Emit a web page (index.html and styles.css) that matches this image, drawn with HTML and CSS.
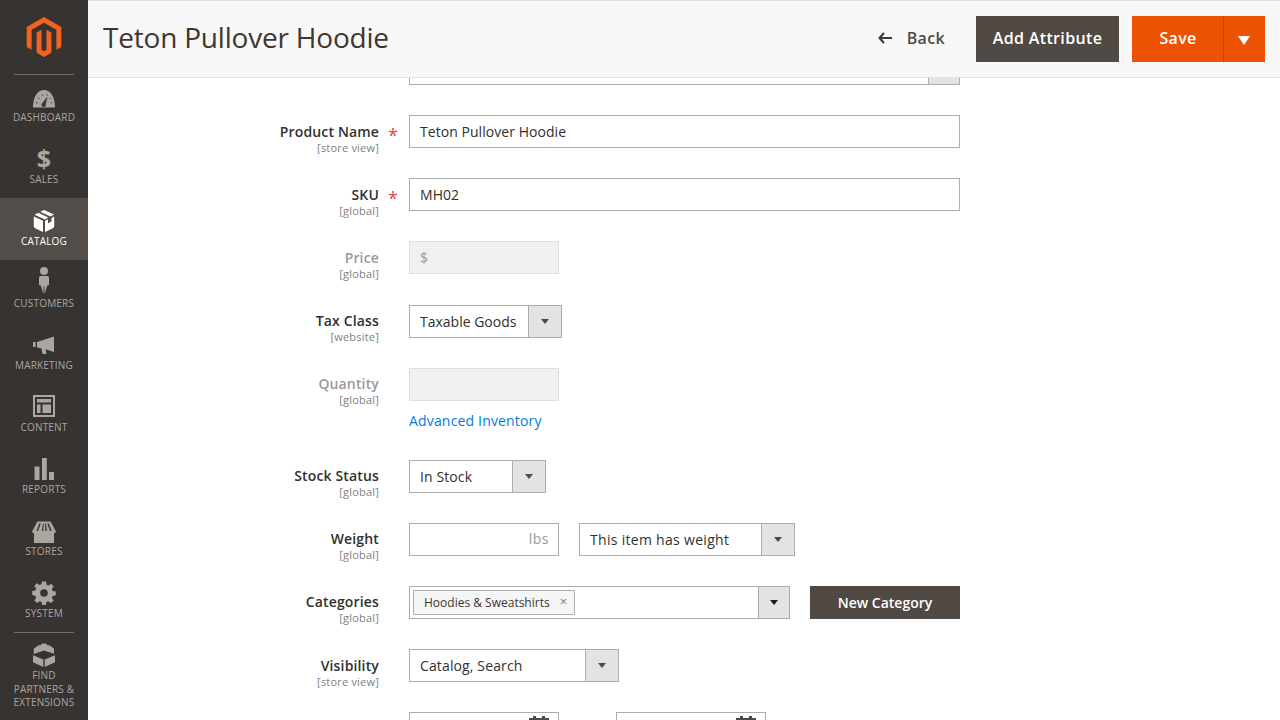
FILE: index.html
```html
<!doctype html>
<html>
<head>
<meta charset='utf-8'>
<title>Teton Pullover Hoodie</title>
<link rel="stylesheet" href="styles.css">
</head>
<body>
<aside class='menu'>
  <div class='logo'>
    <svg width='40' height='40' viewBox='0 0 24 24'><path fill='#f26322' d='M12 24l-4.455-2.572v-12l2.970-1.715v12.001l1.485.902 1.485-.902V7.713l2.970 1.715v12L12 24zM22.391 6v12l-2.969 1.714V7.713L12 3.430 4.574 7.713v12.001L1.609 18V6L12 0l10.391 6z'/></svg>
  </div>
  <div class='menu_rule menu_rule_top'></div>
  <a class='menu_item'>
    <svg class='icon' viewBox='0 -1 24 24'><path d='M1 21.500C1 11 5.500 4 12 4s11 7 11 17.500zM4 17l1.500.6.300-.8L4.300 16zM6 12l1.200 1 .5-.6-1.200-1zM9.800 8.500l.6 1.500.8-.3-.6-1.500zM15 8l-.6 1.500.8.3.6-1.500zM18.200 11.400l-1.200 1 .5.6 1.200-1zM20 16.200l-1.500.6.300.8 1.500-.6zM15.500 10.500l-4.800 6.300a2.200 2.200 0 1 0 3 1.400z' fill-rule='evenodd'/></svg>
    <span>DASHBOARD</span>
  </a>
  <a class='menu_item'>
    <span class='icon icon_dollar'>$</span>
    <span>SALES</span>
  </a>
  <a class='menu_item active'>
    <svg class='icon' viewBox='0 0 24 24'><path d='M12 1l10 4.500-3.600 2L8.300 2.700zM6.300 3.700l10 4.900L13 10.400 2.500 5.700zM1.800 7.500L11 11.700V23L3.500 19.500 1.800 18zM22.200 7.500V18l-1.700 1.500L13 23V11.700l3-1.400v4l3.500-1.700V9z'/></svg>
    <span>CATALOG</span>
  </a>
  <a class='menu_item'>
    <svg class='icon icon_tall' viewBox='0 0 12 27'><path d='M6 0a4 4 0 1 1 0 8 4 4 0 0 1 0-8zM2 9h8l1 1.500V18l-1.800.6L6.700 27l-.4-8h-.6l-.4 8-2.500-8.400L1 18v-7.500z'/></svg>
    <span>CUSTOMERS</span>
  </a>
  <a class='menu_item'>
    <svg class='icon' viewBox='0 0 24 24'><path d='M1 9h2.500v5H1zM5 9l17-5.500V19l-8.500-2.800L14.500 21H10.500l-1-5.800L5 14.500z'/></svg>
    <span>MARKETING</span>
  </a>
  <a class='menu_item'>
    <svg class='icon' viewBox='0 1 24 24'><path fill-rule='evenodd' d='M1 1h22v22H1zM3 3v18h18V3zM5 5h14v3.500H5zM5 10.500h3.500V19H5zM10.500 10.500H19V19h-8.500z'/></svg>
    <span>CONTENT</span>
  </a>
  <a class='menu_item'>
    <svg class='icon' viewBox='0 0 24 24'><path d='M2.500 9.500h5V23h-5zM10 1h4.800v22H10zM17 15h5v8h-5z'/></svg>
    <span>REPORTS</span>
  </a>
  <a class='menu_item'>
    <svg class='icon' viewBox='0 -1 24 24'><path d='M5.500 1.500h13L24 11.500a2.500 2.500 0 0 1-2 1.800V23H2V13.300a2.500 2.500 0 0 1-2-1.800zM7.300 3.500L4.500 11h1.600L8.700 3.500zM11 3.500L9.800 11h1.500l.4-7.500zM13 3.500l.4 7.500h1.500L13.900 3.500zM15.300 3.500L18 11h1.600l-2.800-7.500z' fill-rule='evenodd'/></svg>
    <span>STORES</span>
  </a>
  <a class='menu_item'>
    <svg class='icon' viewBox='0 0 24 24'><path fill-rule='evenodd' d='M10 .5h4l.6 3.200 1.800.8 2.800-1.800 2.500 2.700-1.900 2.700.8 1.900 3.200.5v3.800l-3.200.6-.8 1.800 1.900 2.800-2.700 2.600-2.700-1.900-1.900.8-.6 3.200h-3.600l-.6-3.200-1.900-.8-2.700 1.900-2.600-2.600 1.800-2.800-.8-1.800L.2 13.800V10l3.200-.5.800-1.900L2.300 4.900l2.500-2.700 2.800 1.800 1.800-.8zM12 8.200a3.800 3.800 0 1 0 0 7.600 3.800 3.800 0 0 0 0-7.600z'/></svg>
    <span>SYSTEM</span>
  </a>
  <div class='menu_rule'></div>
  <a class='menu_item partners'>
    <svg class='icon' viewBox='0 0 24 24'><path d='M12 .5c1.800 0 3.200.7 3.300 1.700l.2.100c1.600-.3 3.200.3 3.400 1.300l3.100 1.800v5.400L12 7.500 1.800 11V5.500l3.300-2c.2-1 1.700-1.500 3.300-1.200l.3-.1C8.800 1.200 10.200.5 12 .5zM1 12.300l10.300 4.200V24L1 19.300zM23 12.300v7L12.700 24v-7.500z'/></svg>
    <span>FIND PARTNERS &amp; EXTENSIONS</span>
  </a>
</aside>

<main class='page'>
  <header class='page_head'>
    <h1>Teton Pullover Hoodie</h1>
    <div class='actions'>
      <a class='btn_back'>
        <svg width='14' height='12' viewBox='0 0 14 12'><path d='M6 1L1.500 6 6 11M2 6h12' fill='none' stroke='#41362f' stroke-width='2'/></svg>
        Back
      </a>
      <a class='btn btn_dark'>Add Attribute</a>
      <div class='btn_split'>
        <a class='btn btn_save'>Save</a>
        <a class='btn_toggle'><i class='arrow_white'></i></a>
      </div>
    </div>
  </header>

  <form class='form'>
    <div class='row'>
      <div class='label'></div>
      <div class='req'></div>
      <div class='control'>
        <div class='select select_full'><span class='select_text'>&nbsp;</span><span class='select_btn'></span></div>
      </div>
    </div>

    <div class='row'>
      <div class='label'><b>Product Name</b><small>[store view]</small></div>
      <div class='req'>*</div>
      <div class='control'><div class='input input_full'>Teton Pullover Hoodie</div></div>
    </div>

    <div class='row'>
      <div class='label'><b>SKU</b><small>[global]</small></div>
      <div class='req'>*</div>
      <div class='control'><div class='input input_full'>MH02</div></div>
    </div>

    <div class='row disabled'>
      <div class='label'><b>Price</b><small>[global]</small></div>
      <div class='req'></div>
      <div class='control'><div class='input input_off'>$</div></div>
    </div>

    <div class='row'>
      <div class='label'><b>Tax Class</b><small>[website]</small></div>
      <div class='req'></div>
      <div class='control'>
        <div class='select select_tax'><span class='select_text'>Taxable Goods</span><span class='select_btn'><i class='arrow'></i></span></div>
      </div>
    </div>

    <div class='row disabled'>
      <div class='label'><b>Quantity</b><small>[global]</small></div>
      <div class='req'></div>
      <div class='control'>
        <div class='input input_off'></div>
        <a class='link'>Advanced Inventory</a>
      </div>
    </div>

    <div class='row'>
      <div class='label'><b>Stock Status</b><small>[global]</small></div>
      <div class='req'></div>
      <div class='control'>
        <div class='select select_stock'><span class='select_text'>In Stock</span><span class='select_btn'><i class='arrow'></i></span></div>
      </div>
    </div>

    <div class='row'>
      <div class='label'><b>Weight</b><small>[global]</small></div>
      <div class='req'></div>
      <div class='control control_inline'>
        <div class='input input_unit'>lbs</div>
        <div class='select select_weight'><span class='select_text'>This item has weight</span><span class='select_btn'><i class='arrow'></i></span></div>
      </div>
    </div>

    <div class='row'>
      <div class='label'><b>Categories</b><small>[global]</small></div>
      <div class='req'></div>
      <div class='control control_inline'>
        <div class='multi'>
          <div class='multi_box'><span class='chip'>Hoodies &amp; Sweatshirts<span class='chip_x'>×</span></span></div>
          <span class='select_btn'><i class='arrow arrow_dark'></i></span>
        </div>
        <a class='btn_new'>New Category</a>
      </div>
    </div>

    <div class='row'>
      <div class='label'><b>Visibility</b><small>[store view]</small></div>
      <div class='req'></div>
      <div class='control'>
        <div class='select select_vis'><span class='select_text'>Catalog, Search</span><span class='select_btn'><i class='arrow'></i></span></div>
      </div>
    </div>

    <div class='row'>
      <div class='label'></div>
      <div class='req'></div>
      <div class='control control_dates'>
        <div class='input input_date'>
          <svg width='20' height='20' viewBox='0 0 20 20'><path fill='#514943' d='M4 0h3v2h6V0h3v2h4v18H0V2h4zM2 6v12h16V6z'/></svg>
        </div>
        <div class='input input_date'>
          <svg width='20' height='20' viewBox='0 0 20 20'><path fill='#514943' d='M4 0h3v2h6V0h3v2h4v18H0V2h4zM2 6v12h16V6z'/></svg>
        </div>
      </div>
    </div>
  </form>
</main>
</body>
</html>
```

FILE: styles.css
```css
html, body {
  margin: 0;
  height: 720px;
  overflow: hidden;
}
body {
  display: flex;
  background: white;
  color: #303030;
  font-family: "Open Sans", sans-serif;
  font-size: 14px;
}

/* left menu */
.menu {
  width: 88px;
  flex: none;
  background: #373330;
  color: #aaa6a0;
  display: flex;
  flex-direction: column;
}
.logo {
  height: 74px;
  box-sizing: border-box;
  padding-top: 17px;
  display: flex;
  justify-content: center;
}
.menu_rule {
  height: 1px;
  margin: 0 14px;
  background: #736d69;
  flex: none;
}
.menu_rule_top {
  margin-bottom: -1px;
}
.menu_item {
  height: 62px;
  box-sizing: border-box;
  padding-top: 11px;
  display: flex;
  flex-direction: column;
  align-items: center;
  font-size: 10px;
  line-height: 14px;
  letter-spacing: .2px;
  text-align: center;
  flex: none;
}
.menu_item .icon {
  margin-bottom: 1px;
}
.icon {
  width: 24px;
  height: 24px;
  fill: #aaa6a0;
  display: block;
}
.menu_item .icon_tall {
  width: 12px;
  height: 27px;
  margin: -4px 0 2px;
}
.icon_dollar {
  font-size: 25px;
  font-weight: 700;
  line-height: 22px;
  text-align: center;
}
.active {
  background: #524d49;
  color: #fff;
}
.active .icon {
  fill: #fff;
}
.partners {
  height: 87px;
  padding-top: 10px;
  line-height: 13.500px;
}
.partners span {
  display: block;
  width: 68px;
  margin-top: 1px;
}

/* page */
.page {
  flex: 1;
  position: relative;
  height: 720px;
  overflow: hidden;
}
.page_head {
  position: absolute;
  left: 0;
  right: 0;
  top: 0;
  height: 76px;
  background: #f8f8f8;
  border-top: 1px solid #e3e3e3;
  border-bottom: 1px solid #e3e3e3;
  display: flex;
  align-items: center;
  justify-content: space-between;
  padding: 0 15px;
  z-index: 2;
}
h1 {
  margin: -4px 0 0;
  font-size: 28px;
  font-weight: 400;
  letter-spacing: -.2px;
  color: #41362f;
}
.actions {
  display: flex;
  align-items: center;
  font-size: 16px;
  letter-spacing: .35px;
}
.btn_back {
  color: #514943;
  font-weight: 600;
  display: flex;
  align-items: center;
  gap: 15px;
  margin-right: 31px;
  padding-bottom: 2px;
}
.btn {
  height: 46px;
  box-sizing: border-box;
  padding-bottom: 2px;
  display: flex;
  align-items: center;
  justify-content: center;
  font-weight: 600;
  color: #fff;
}
.btn_dark {
  width: 143px;
  background: #514943;
  margin-right: 13px;
}
.btn_split {
  display: flex;
}
.btn_save {
  width: 91px;
  padding-left: 1px;
  background: #eb5202;
}
.btn_toggle {
  width: 41px;
  height: 46px;
  box-sizing: content-box;
  background: #eb5202;
  border-left: 1px solid #c74602;
  display: flex;
  align-items: center;
  justify-content: center;
}
.arrow_white {
  border-style: solid;
  border-width: 9px 6px 0;
  border-color: #fff transparent transparent;
  margin: 2px 1px 0 0;
}

/* form */
.form {
  padding-top: 51.950px;
  display: flex;
  flex-direction: column;
  gap: 30.150px;
}
.row {
  display: grid;
  grid-template-columns: 291px 30px 551px;
}
.label {
  height: 33px;
  text-align: right;
  padding-top: 7.450px;
  box-sizing: border-box;
}
.label b {
  display: block;
  font-weight: 600;
  line-height: 17px;
  letter-spacing: .15px;
}
.label small {
  display: block;
  font-size: 11px;
  line-height: 15px;
  letter-spacing: .2px;
  color: #808080;
}
.disabled .label b {
  color: #999;
}
.req {
  color: #d84a4a;
  font-size: 18px;
  line-height: 33px;
  padding: 4px 0 0 9px;
  box-sizing: border-box;
  height: 33px;
}
.control_inline {
  display: flex;
  gap: 20px;
}
.control_dates {
  display: flex;
  gap: 57px;
}
.input {
  height: 33px;
  box-sizing: border-box;
  border: 1px solid #adadad;
  padding: 0 10px;
  line-height: 31px;
  width: 150px;
}
.input_full {
  width: 551px;
  letter-spacing: .05px;
}
.input_off {
  background: #f0f0f0;
  border-color: #dedede;
  color: #999;
}
.input_unit {
  text-align: right;
  color: #999;
  line-height: 29px;
  letter-spacing: .5px;
  padding-right: 9px;
}
.input_date {
  display: flex;
  justify-content: flex-end;
  padding: 3px 9px 0 0;
}
.link {
  display: block;
  margin-top: 11px;
  line-height: 17.950px;
  letter-spacing: .17px;
  color: #007bdb;
}
.select {
  display: flex;
  height: 33px;
  box-sizing: border-box;
  border: 1px solid #adadad;
  line-height: 31px;
}
.select_full {
  width: 551px;
}
.select_full .select_btn {
  width: 30px;
}
.select_tax {
  width: 153px;
}
.select_stock {
  width: 137px;
  letter-spacing: .1px;
}
.select_weight {
  width: 216px;
  letter-spacing: .3px;
}
.select_vis {
  width: 210px;
  letter-spacing: .13px;
}
.select_text {
  flex: 1;
  padding-left: 10px;
}
.select_btn {
  width: 32px;
  background: #e3e3e3;
  border-left: 1px solid #adadad;
  display: flex;
  align-items: center;
  justify-content: center;
}
.arrow {
  border-style: solid;
  border-width: 5px 4px 0;
  border-color: #514943 transparent transparent;
}
.arrow_dark {
  border-color: #1d1d1d transparent transparent;
}
.multi {
  width: 381px;
  height: 33px;
  box-sizing: border-box;
  border: 1px solid #adadad;
  display: flex;
  justify-content: space-between;
}
.multi .select_btn {
  width: 30px;
}
.multi_box {
  padding: 3px;
}
.chip {
  display: flex;
  height: 25px;
  box-sizing: border-box;
  align-items: center;
  padding: 0 7px 0 10px;
  background: #f5f5f5;
  border: 1px solid #adadad;
  border-radius: 1px;
  font-size: 12px;
  color: #41362f;
}
.chip_x {
  margin-left: 10px;
  margin-top: -3px;
  color: #808080;
  font-size: 13px;
}
.btn_new {
  width: 150px;
  height: 33px;
  background: #514943;
  color: #fff;
  font-weight: 600;
  text-align: center;
  line-height: 33px;
}
```
